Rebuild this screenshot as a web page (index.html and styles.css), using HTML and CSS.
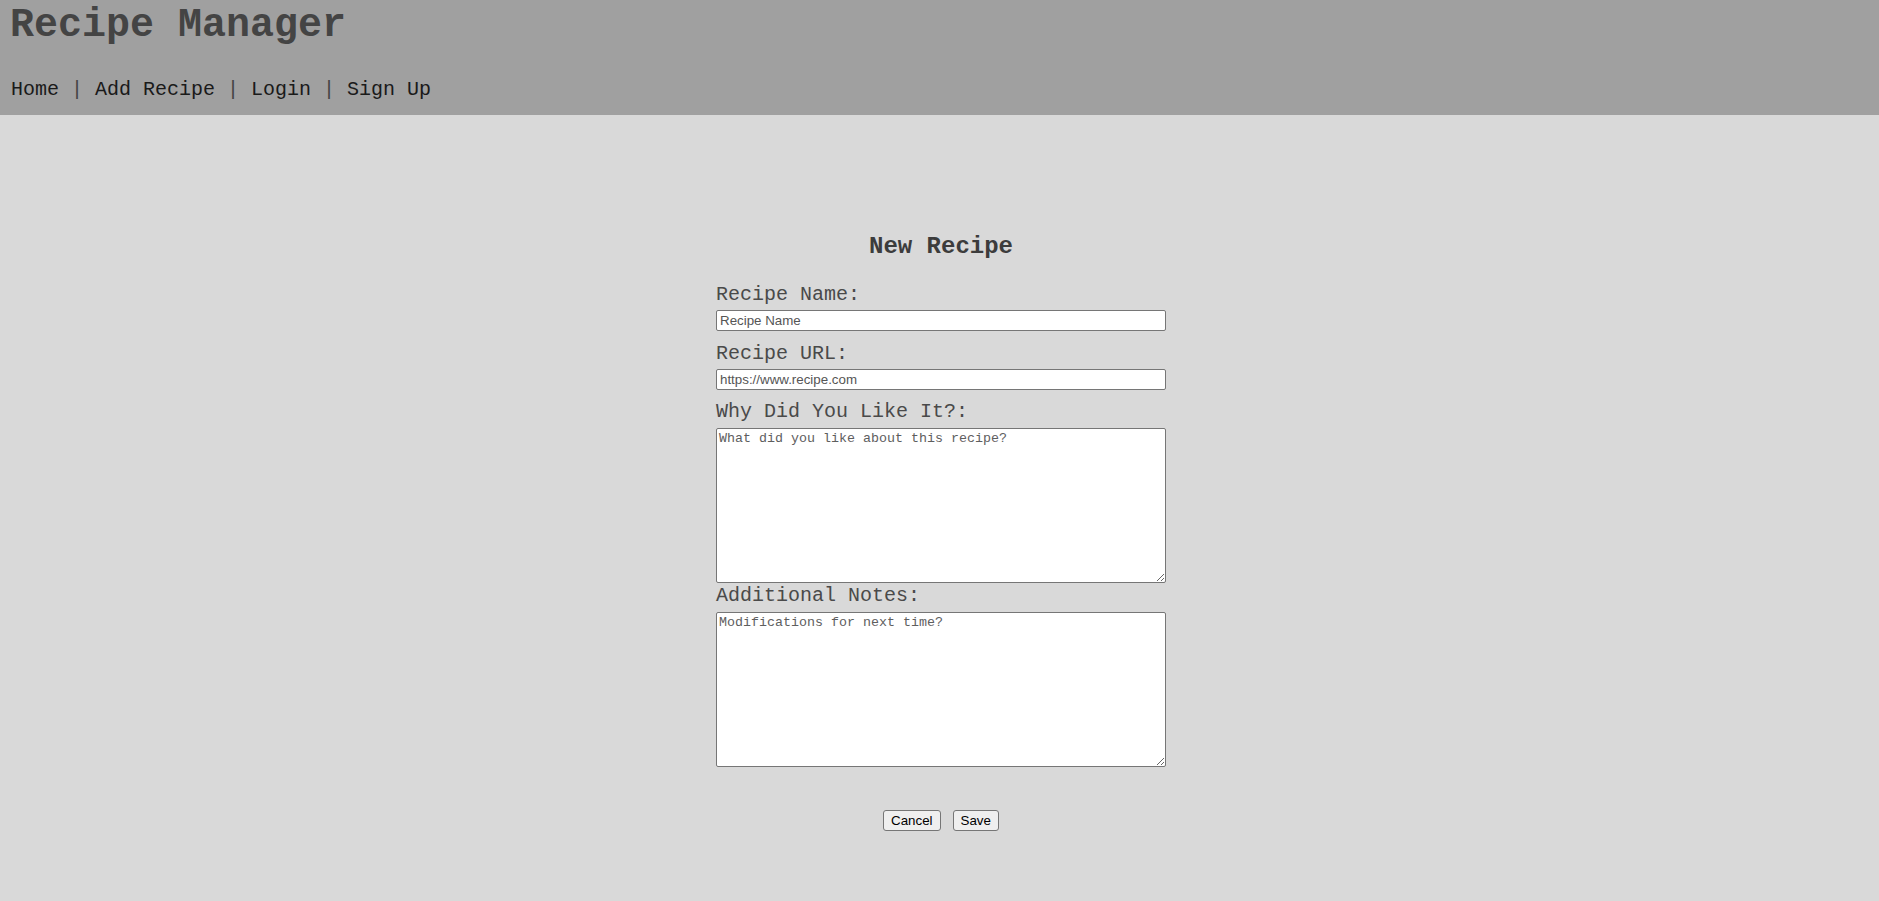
FILE: index.html
```html
<!DOCTYPE html>
<html lang="en">
<head>
<meta charset="utf-8">
<title>Recipe Manager</title>
<link rel="stylesheet" href="styles.css">
</head>
<body>
<header class="site-header">
  <h1 class="site-title">Recipe Manager</h1>
  <nav class="site-nav"><a class="nav-link" href="#">Home</a><span class="sep"> | </span><a class="nav-link" href="#">Add Recipe</a><span class="sep"> | </span><a class="nav-link" href="#">Login</a><span class="sep"> | </span><a class="nav-link" href="#">Sign Up</a></nav>
</header>
<main class="page">
  <form class="recipe-form">
    <h2 class="form-title">New Recipe</h2>
    <label class="field-label" for="name">Recipe Name:</label>
    <input class="text-input" id="name" type="text" placeholder="Recipe Name">
    <label class="field-label" for="url">Recipe URL:</label>
    <input class="text-input" id="url" type="text" placeholder="https://www.recipe.com">
    <label class="field-label" for="why">Why Did You Like It?:</label>
    <textarea class="text-area" id="why" placeholder="What did you like about this recipe?"></textarea>
    <label class="field-label" for="notes">Additional Notes:</label>
    <textarea class="text-area" id="notes" placeholder="Modifications for next time?"></textarea>
    <div class="actions">
      <button class="btn" type="button">Cancel</button>
      <button class="btn" type="button">Save</button>
    </div>
  </form>
</main>
</body>
</html>
```

FILE: styles.css
```css
html, body {
  margin: 0;
  padding: 0;
  height: 100%;
}
body {
  background: #d9d9d9;
  font-family: "Liberation Mono", "Courier New", monospace;
  color: #444;
}
.site-header {
  background: #a0a0a0;
  height: 115px;
  box-sizing: border-box;
  padding: 3px 10px 0;
}
.site-title {
  margin: 0;
  font-size: 40px;
  line-height: 45px;
  font-weight: bold;
  color: #444;
}
.site-nav {
  margin-top: 29.5px;
  padding-left: 1px;
  font-size: 20px;
  line-height: 23px;
  color: #444;
  white-space: pre;
}
.nav-link {
  color: #1a1a1a;
  text-decoration: none;
}
.page {
  display: flex;
  justify-content: center;
  padding: 118px 0 0 3px;
}
.recipe-form {
  width: 450px;
  display: flex;
  flex-direction: column;
}
.form-title {
  margin: 0 0 23px;
  font-size: 24px;
  line-height: 27px;
  font-weight: bold;
  text-align: center;
  color: #3c3c3c;
}
.field-label {
  font-size: 20px;
  line-height: 23px;
  color: #4a4a4a;
}
.text-input {
  box-sizing: border-box;
  width: 450px;
  height: 21px;
  margin: 4px 0 10.5px;
  padding: 1px 3px;
  border: 1px solid #767676;
  border-radius: 2px;
  background: #fff;
  font-family: "Liberation Sans", Arial, sans-serif;
  font-size: 13.333px;
  color: #000;
}
.text-input::placeholder {
  color: #555;
}
.text-area {
  box-sizing: border-box;
  width: 450px;
  height: 155px;
  margin: 5px 0 1px;
  padding: 2px;
  border: 1px solid #767676;
  border-radius: 2px;
  background: #fff;
  font-family: "Liberation Mono", "Courier New", monospace;
  font-size: 13.333px;
  color: #000;
}
.text-area::placeholder {
  color: #5e5e5e;
}
.actions {
  display: flex;
  justify-content: center;
  gap: 12px;
  margin-top: 42px;
}
.btn {
  box-sizing: border-box;
  height: 21px;
  padding: 1px 7px;
  border: 1px solid #767676;
  border-radius: 3px;
  background: #efefef;
  font-family: "Liberation Sans", Arial, sans-serif;
  font-size: 13.333px;
  color: #000;
}
```
